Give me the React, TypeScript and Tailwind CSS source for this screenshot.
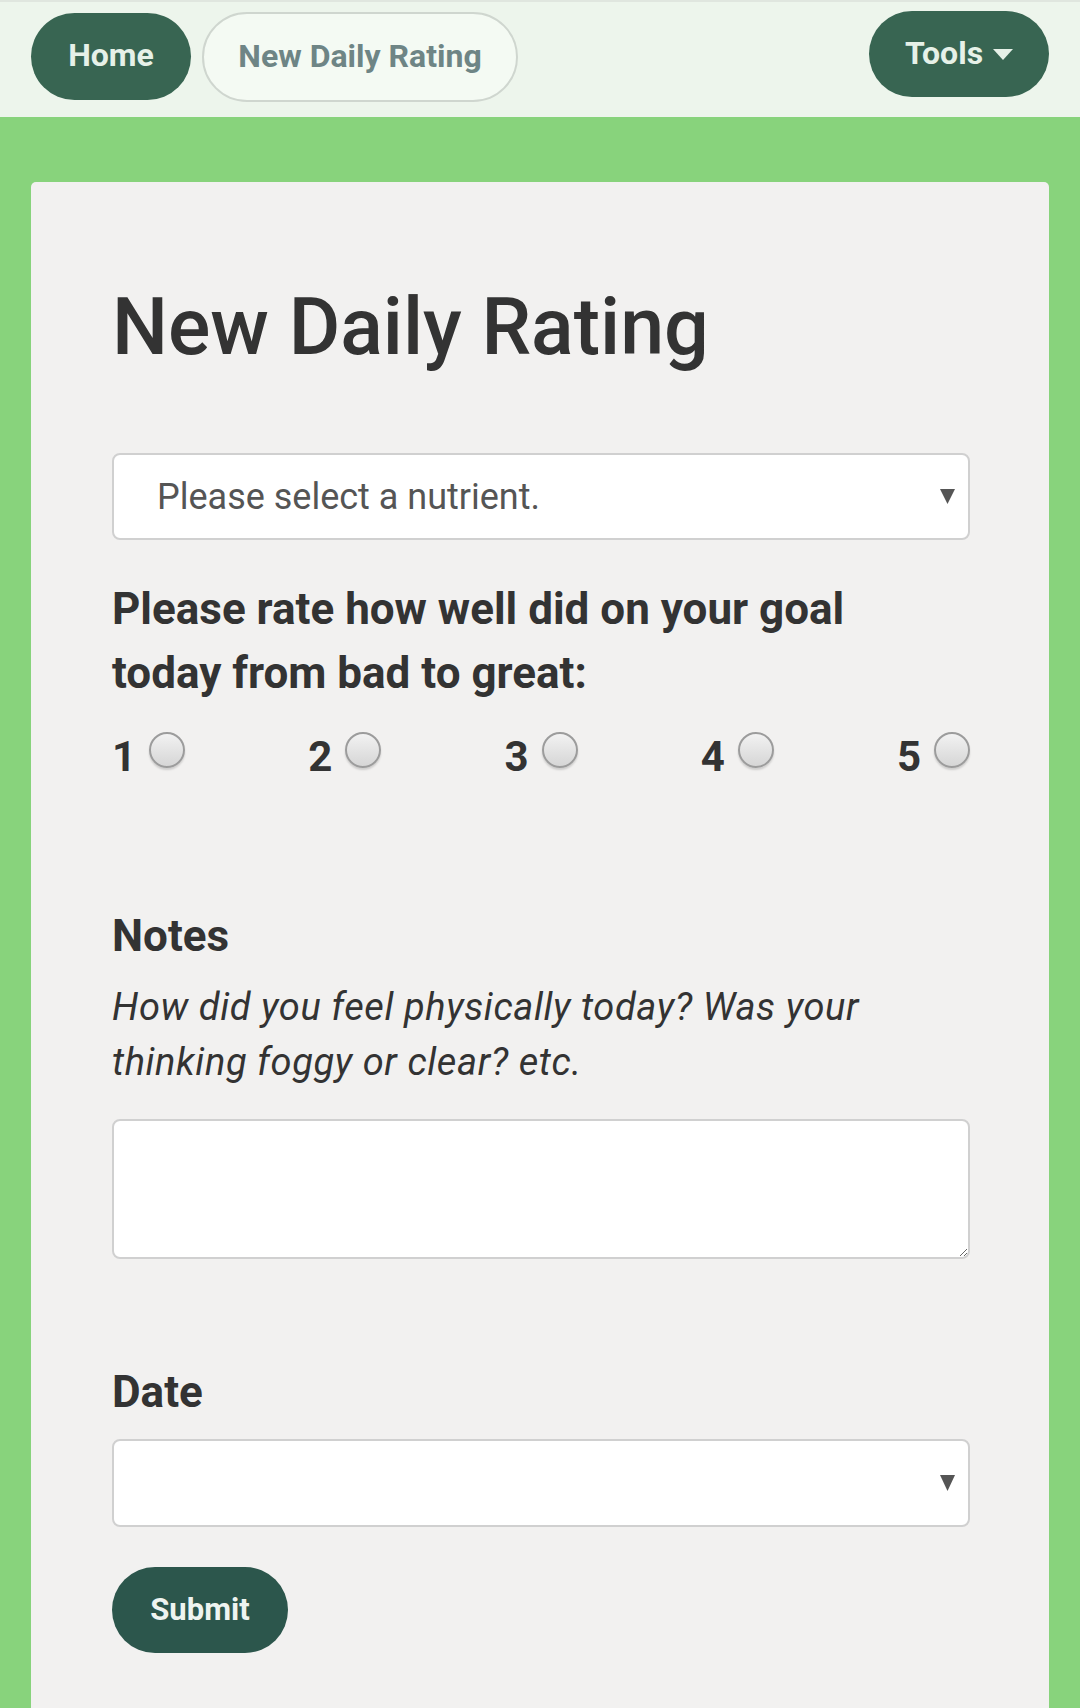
import React, {useState} from 'react';

// Rating options
const ratings = [1, 2, 3, 4, 5];

const Caret = ({className}: {className: string}) => (
  <svg viewBox="0 0 16 14" preserveAspectRatio="none" className={className} fill="currentColor">
    <polygon points="0,0 16,0 8,14"/>
  </svg>
);

const App = () => {
  const [rating, setRating] = useState<number | null>(null);
  const [notes, setNotes] = useState('');

  return (
    <div className="min-h-[1708px] bg-[#88d37c] font-['Roboto',sans-serif] text-[#333]">
      {/* Top nav */}
      <div className="h-[117px] bg-[#edf5ec] border-t-2 border-[#e0e6df] flex items-start justify-between pl-[31px] pr-[31px]">
        <div className="flex items-start gap-[11px]">
          <button className="mt-[11px] h-[87px] w-[160px] pb-[3px] rounded-full bg-[#386552] text-[#e6f1e8] text-[32px] font-bold">
            Home
          </button>
          <button className="mt-[10px] h-[90px] w-[316px] pb-[3px] rounded-full bg-[#f4faf3] border-2 border-[#cfd6cf] text-[#6e8585] text-[32px] font-bold">
            New Daily Rating
          </button>
        </div>
        <button className="mt-[9px] h-[86px] w-[180px] pb-[3px] rounded-full bg-[#386552] text-[#e6f1e8] text-[32px] font-bold flex items-center justify-center gap-[10px]">
          Tools
          <Caret className="w-[20px] h-[11px] mt-[3px]"/>
        </button>
      </div>

      {/* Card */}
      <div className="pt-[65px] px-[31px]">
        <div className="bg-[#f2f1f0] rounded-[5px] pl-[81px] pr-[79px] pt-[106px] pb-[60px] min-h-[1600px]">
          <h1 className="text-[79px] leading-none font-medium">New Daily Rating</h1>

          <div className="mt-[86px] h-[87px] bg-white border-2 border-[#d0d0d0] rounded-[8px] flex items-center justify-between pl-[43px] pr-[13px]">
            <span className="text-[36px] text-[#555]">Please select a nutrient.</span>
            <Caret className="w-[15px] h-[15px] text-[#555]"/>
          </div>

          <p className="mt-[37px] text-[44px] leading-[64px] font-bold max-w-[800px]">
            Please rate how well did on your goal today from bad to great:
          </p>

          <div className="mt-[31px] flex justify-between items-start">
            {ratings.map(r => <label key={r} className="flex items-start cursor-pointer" onClick={() => setRating(r)}>
              <span className="text-[42px] leading-none font-bold">{r}</span>
              <span
                className="ml-[13px] -mt-[4px] w-[36px] h-[36px] rounded-full border-2 border-[#9c9c9c] bg-gradient-to-b from-[#f2f2f2] to-[#d6d6d6] shadow-[0_2px_2px_rgba(0,0,0,0.15)] flex items-center justify-center">
                {rating === r && <span className="w-[14px] h-[14px] rounded-full bg-[#386552]"/>}
              </span>
            </label>)}
          </div>

          <h3 className="mt-[136px] text-[44px] leading-none font-bold">Notes</h3>
          <p className="mt-[22px] text-[38px] leading-[55px] italic tracking-[0.6px]">
            How did you feel physically today? Was your thinking foggy or clear? etc.
          </p>
          <textarea
            className="mt-[29px] block w-full h-[140px] bg-white border-2 border-[#d0d0d0] rounded-[8px] resize-y outline-none p-3 text-[30px]"
            value={notes}
            onChange={(e) => setNotes(e.target.value)}
          />

          <h3 className="mt-[111px] text-[44px] leading-none font-bold">Date</h3>
          <div className="mt-[25px] h-[88px] bg-white border-2 border-[#d0d0d0] rounded-[8px] flex items-center justify-end pr-[13px]">
            <Caret className="w-[15px] h-[16px] text-[#555]"/>
          </div>

          <button className="mt-[40px] h-[86px] w-[176px] rounded-full bg-[#2c564c] text-[#eef4f0] text-[31px] font-bold">
            Submit
          </button>
        </div>
      </div>
    </div>
  )
};

export default App;
